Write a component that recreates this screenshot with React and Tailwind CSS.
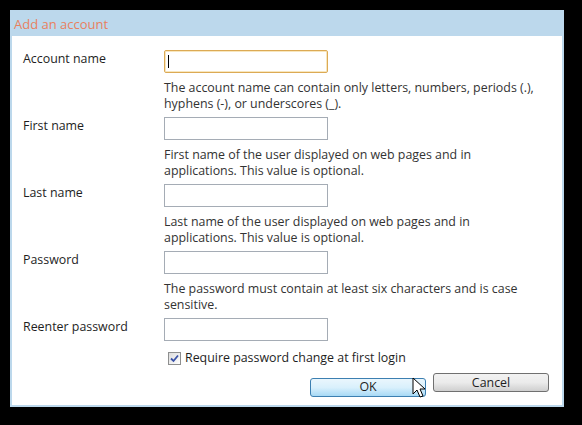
import { useState } from 'react'

const fields = [
  {
    label: 'Account name',
    hint: 'The account name can contain only letters, numbers, periods (.), hyphens (-), or underscores (_).',
    focused: true,
  },
  {
    label: 'First name',
    hint: 'First name of the user displayed on web pages and in applications. This value is optional.',
  },
  {
    label: 'Last name',
    hint: 'Last name of the user displayed on web pages and in applications. This value is optional.',
  },
  {
    label: 'Password',
    hint: 'The password must contain at least six characters and is case sensitive.',
  },
  { label: 'Reenter password' },
]

function Field({ label, hint, focused }) {
  return (
    <div className="flex flex-col">
      <div className="flex items-start">
        <label className="w-[141px] pt-[1px] text-[12.4px] leading-[16px] text-[#1e1e1e]">{label}</label>
        <div className="relative">
          <input
            className={
              focused
                ? 'block h-[23px] w-[164px] rounded-[2px] border border-[#dcaa55] bg-white px-1 outline-none shadow-[inset_0_0_0_1px_#f8e7bf]'
                : 'block h-[23px] w-[164px] border border-[#a5acb5] bg-white px-1 outline-none'
            }
          />
          {focused && <span className="absolute left-[4px] top-[5px] h-[13px] w-[1px] bg-black" />}
        </div>
      </div>
      {hint && (
        <p className="ml-[141px] mt-[7px] mb-[5px] w-[378px] text-[12.4px] leading-[16px] text-[#333]">{hint}</p>
      )}
    </div>
  )
}

function Cursor() {
  return (
    <svg width="16" height="24" viewBox="0 0 16 24" className="absolute left-[102px] top-[4px]">
      <path d="M1 1 L1 17 L5 13 L8 20 L11 19 L8 12 L13 12 Z" fill="white" stroke="black" strokeWidth="1" strokeLinejoin="round" />
    </svg>
  )
}

function Check({ checked, onToggle }) {
  return (
    <span
      onClick={onToggle}
      className="flex h-[13px] w-[13px] items-center justify-center border border-[#8e8f8f] bg-gradient-to-br from-[#dcdcdc] to-[#ffffff]"
    >
      {checked && (
        <svg width="9" height="9" viewBox="0 0 9 9">
          <path d="M1 4.5 L3.5 7 L8 1.5" fill="none" stroke="#3a52a8" strokeWidth="1.8" />
        </svg>
      )}
    </span>
  )
}

export default function App() {
  const [checked, setChecked] = useState(true)
  return (
    <div
      className="h-[425px] w-[582px] bg-black pl-[10px] pt-[10px]"
      style={{ fontFamily: '"Open Sans", "Noto Sans", sans-serif' }}
    >
      <div className="flex h-[397px] w-[554px] flex-col border-x-2 border-b-2 border-[#bcd8ec] bg-[#bcd8ec]">
        <div className="flex h-[26px] items-end px-[2px] pb-[4px] text-[13px] leading-[16px] text-[#e8805e]">
          Add an account
        </div>
        <div className="flex flex-1 flex-col bg-white pl-[11px] pt-[14px] pr-[13px]">
          {fields.map((f) => (
            <Field key={f.label} {...f} />
          ))}
          <div className="ml-[145px] mt-[9px] flex items-center gap-[4px] text-[12.4px] leading-[16px] text-[#1e1e1e]">
            <Check checked={checked} onToggle={() => setChecked(!checked)} />
            <span>Require password change at first login</span>
          </div>
          <div className="mt-[7px] flex justify-end gap-[7px]">
            <div className="relative">
              <button className="h-[19px] w-[116px] rounded-[3px] border border-[#3c7fb1] bg-gradient-to-b from-[#eaf6fd] via-[#d9f0fc] to-[#a7d9f5] text-[12.4px] leading-[16px] text-[#1e1e1e]">
                OK
              </button>
              <Cursor />
            </div>
            <button className="h-[19px] w-[116px] rounded-[3px] border border-[#707070] bg-gradient-to-b from-[#f2f2f2] via-[#ebebeb] to-[#cfcfcf] text-[12.4px] leading-[16px] text-[#1e1e1e]">
              Cancel
            </button>
          </div>
        </div>
      </div>
    </div>
  )
}
